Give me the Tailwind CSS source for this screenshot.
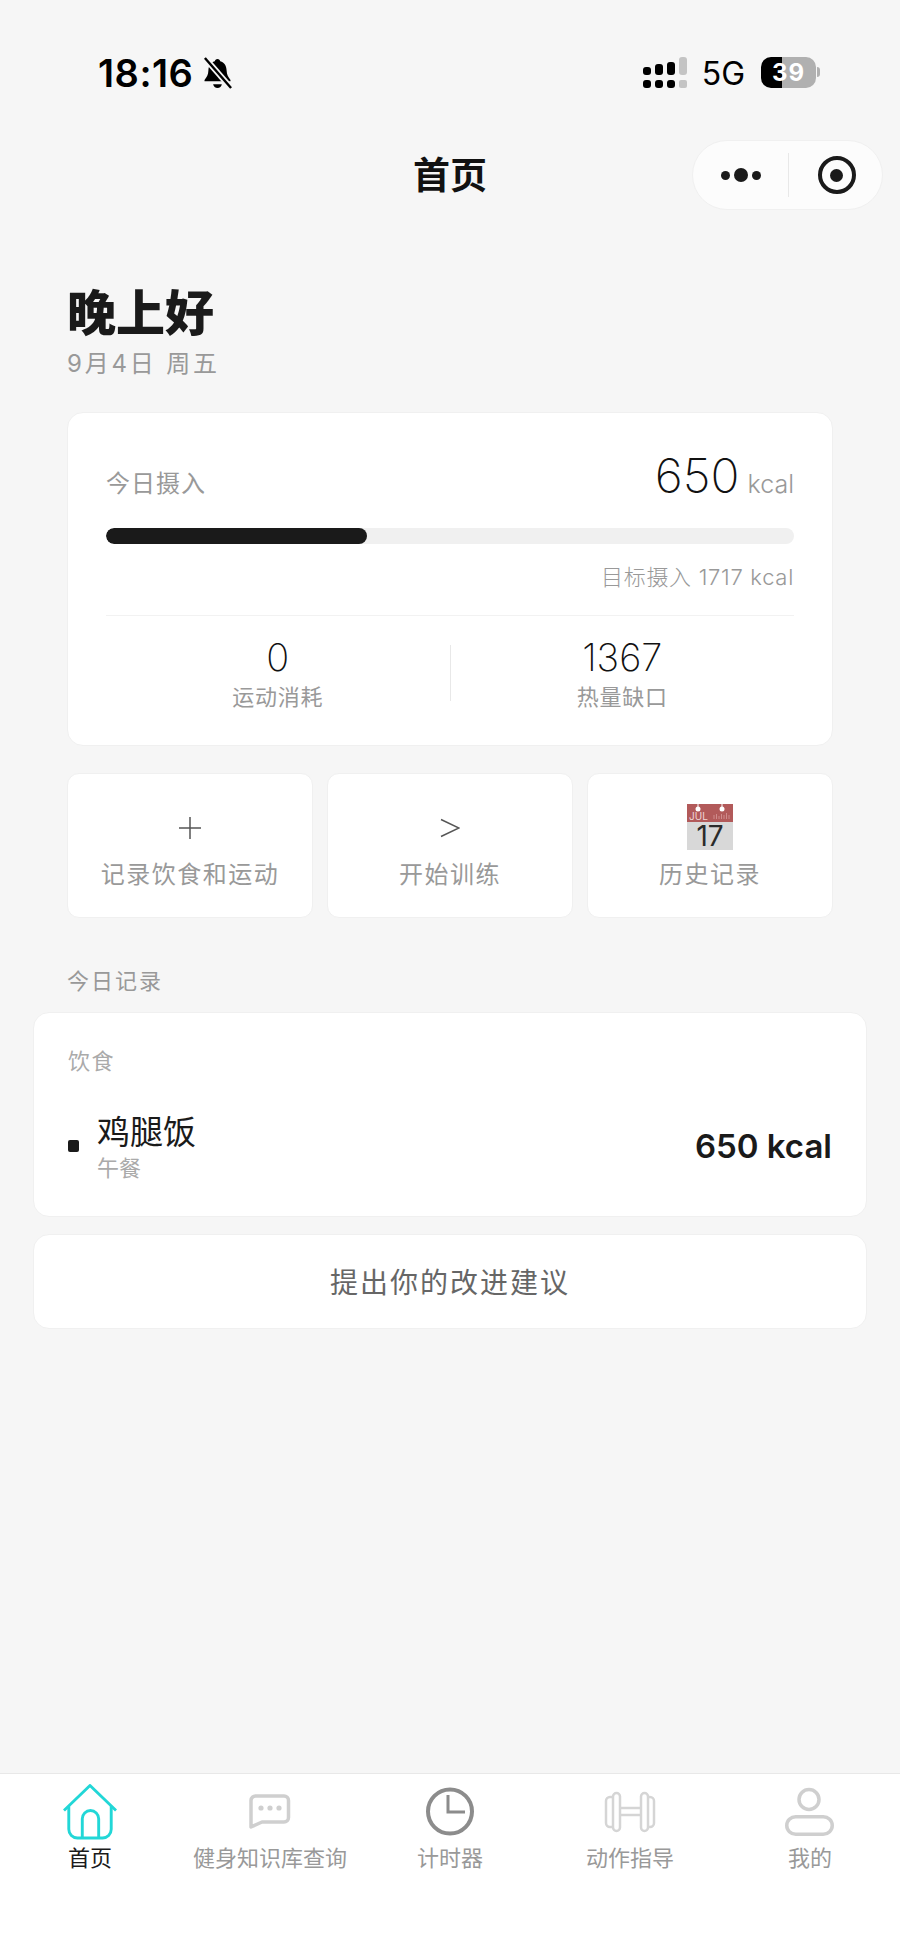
<!DOCTYPE html>
<html lang="zh-CN">
<head>
  <title>首页</title>
  <meta charset="utf-8">
  <script src="https://cdn.jsdelivr.net/npm/@tailwindcss/browser@4"></script>
</head>
<body class="w-[900px] h-[1957px] flex flex-col bg-[#f6f6f6] text-[#1a1a1a] font-['Inter','Noto_Sans_CJK_SC',sans-serif] overflow-hidden">

  <!-- status bar -->
  <div class="h-[140px] flex justify-between pt-[56px] pl-[98px] pr-[80px] shrink-0">
    <div class="flex h-[34px] items-center text-black">
      <span class="text-[38px] leading-none font-semibold tracking-[0.500px]">18:16</span>
      <svg class="ml-[9px]" width="31" height="35" viewBox="0 0 32 36">
        <path d="M16 3c1.600 0 2.600 1 2.800 2.400 4.400 1.200 6.400 4.800 6.600 9.600.2 4.600 1.600 6.600 4 9.600v1.400H2.600v-1.400c2.400-3 3.800-5 4-9.600.2-4.800 2.200-8.400 6.600-9.600C13.400 4 14.400 3 16 3z" fill="#000"/>
        <path d="M11.500 29h9c-.4 2.400-2.200 4-4.500 4s-4.100-1.600-4.500-4z" fill="#000"/>
        <path d="M3 2l27 31" stroke="#f6f6f6" stroke-width="6"/>
        <path d="M3 2l27 31" stroke="#000" stroke-width="2.500"/>
      </svg>
    </div>
    <div class="flex h-[32px] items-center">
      <div class="flex flex-col gap-[5px] w-[44px]">
        <div class="flex items-end gap-[4px] h-[18px]">
          <div class="w-[8px] h-[8px] rounded-[3px] bg-black"></div>
          <div class="w-[8px] h-[11px] rounded-[3px] bg-black"></div>
          <div class="w-[8px] h-[13px] rounded-[3px] bg-black"></div>
          <div class="w-[8px] h-[18px] rounded-[3px] bg-[#c4c4c4]"></div>
        </div>
        <div class="flex gap-[4px] h-[8px]">
          <div class="w-[8px] rounded-[3px] bg-black"></div>
          <div class="w-[8px] rounded-[3px] bg-black"></div>
          <div class="w-[8px] rounded-[3px] bg-black"></div>
          <div class="w-[8px] rounded-[2px] bg-[#c4c4c4]"></div>
        </div>
      </div>
      <span class="ml-[15px] text-[32px] leading-none font-normal text-black mt-[3px]">5G</span>
      <div class="ml-[16px] relative flex w-[55px] h-[31px] rounded-[10px] overflow-hidden">
        <div class="w-[21px] bg-black"></div>
        <div class="flex-1 bg-[#b0b0b0]"></div>
        <span class="absolute inset-0 text-center text-white text-[24px] leading-[31px] font-bold tracking-[1px]">39</span>
      </div>
      <div class="ml-[1px] w-[3px] h-[10px] rounded-r-full bg-[#b0b0b0]"></div>
    </div>
  </div>

  <!-- nav bar -->
  <div class="relative h-[70px] flex items-center justify-center shrink-0">
    <h1 class="text-[37px] leading-none font-bold text-[#111]">首页</h1>
    <div class="absolute right-[17px] top-0 w-[191px] h-[70px] flex items-center rounded-full bg-[#fcfcfc] border border-[#f0f0f0]">
      <div class="w-[95px] flex items-center justify-center gap-[4px]">
        <div class="w-[9px] h-[9px] rounded-full bg-[#1a1a1a]"></div>
        <div class="w-[14px] h-[14px] rounded-full bg-[#1a1a1a]"></div>
        <div class="w-[9px] h-[9px] rounded-full bg-[#1a1a1a]"></div>
      </div>
      <div class="w-px h-[44px] bg-[#e8e8e8]"></div>
      <div class="flex-1 flex items-center justify-center pl-[2px]">
        <div class="w-[38px] h-[38px] rounded-full border-[4px] border-[#1a1a1a] flex items-center justify-center">
          <div class="w-[13px] h-[13px] rounded-full bg-[#1a1a1a]"></div>
        </div>
      </div>
    </div>
  </div>

  <main class="flex-1 flex flex-col">
    <!-- greeting -->
    <div class="px-[67px] pt-[74px]">
      <h2 class="text-[49px] leading-[60px] font-black">晚上好</h2>
      <p class="mt-[4px] text-[24px] leading-[32px] text-[#999] tracking-[2.800px]">9月4日 周五</p>
    </div>

    <!-- intake card -->
    <section class="mx-[67px] mt-[32px] h-[334px] rounded-[16px] bg-white border border-[#f0f0f0] px-[38px]">
      <div class="flex justify-between items-end h-[88px] pt-[30px]">
        <span class="text-[24px] leading-[30px] text-[#999] tracking-[1px] mb-[2px]">今日摄入</span>
        <div class="flex items-baseline">
          <span class="text-[48px] leading-[50px] font-extralight text-[#111]">650</span>
          <span class="ml-[8px] text-[25px] leading-[30px] font-light text-[#999]">kcal</span>
        </div>
      </div>
      <div class="mt-[27px] h-[16px] rounded-full bg-[#f0f0f0] overflow-hidden">
        <div class="w-[261px] h-full rounded-full bg-[#1a1a1a]"></div>
      </div>
      <p class="mt-[18px] text-right text-[22px] leading-[30px] font-light tracking-[0.700px] text-[#999]">目标摄入 1717 kcal</p>
      <div class="mt-[23px] border-t border-[#f2f2f2] pt-[22px] flex items-center">
        <div class="flex-1 text-center">
          <div class="text-[38px] leading-[38px] font-extralight text-[#111]">0</div>
          <div class="mt-[6px] text-[22px] leading-[30px] tracking-[0.800px] text-[#999]">运动消耗</div>
        </div>
        <div class="w-px h-[56px] bg-[#e8e8e8] -mt-[5px]"></div>
        <div class="flex-1 text-center">
          <div class="text-[38px] leading-[38px] font-extralight text-[#111]">1367</div>
          <div class="mt-[6px] text-[22px] leading-[30px] tracking-[0.800px] text-[#999]">热量缺口</div>
        </div>
      </div>
    </section>

    <!-- quick actions -->
    <section class="mx-[67px] mt-[27px] grid grid-cols-3 gap-[14px]">
      <div class="h-[145px] rounded-[12px] bg-white border border-[#f0f0f0] flex flex-col items-center">
        <div class="h-[85px] flex items-center justify-center pt-[23px]">
          <svg width="22" height="22" viewBox="0 0 22 22"><path d="M11 0v22M0 11h22" stroke="#555" stroke-width="1.500"/></svg>
        </div>
        <span class="text-[24px] leading-[32px] tracking-[1.500px] text-[#999]">记录饮食和运动</span>
      </div>
      <div class="h-[145px] rounded-[12px] bg-white border border-[#f0f0f0] flex flex-col items-center">
        <div class="h-[85px] flex items-center justify-center pt-[23px]">
          <svg width="20" height="20" viewBox="0 0 20 20"><path d="M1 1.500 19 10 1 18.500" fill="none" stroke="#555" stroke-width="1.500"/></svg>
        </div>
        <span class="text-[24px] leading-[32px] tracking-[1.500px] text-[#999]">开始训练</span>
      </div>
      <div class="h-[145px] rounded-[12px] bg-white border border-[#f0f0f0] flex flex-col items-center">
        <div class="h-[85px] flex items-center justify-center pt-[20px]">
          <svg class="-mb-[4px]" width="46" height="50" viewBox="0 0 46 50">
            <rect y="0" width="46" height="18" fill="#b25a5a"/>
            <rect y="18" width="46" height="28" fill="#d8d8d8"/>
            <circle cx="11" cy="5" r="2.500" fill="#fff"/>
            <circle cx="35" cy="5" r="2.500" fill="#fff"/>
            <path d="M11 0v4M35 0v4" stroke="#fff" stroke-width="1"/>
            <path d="M27 15v-4M29.500 15v-5M32 15v-3M34.500 15v-5M37 15v-4M39.500 15v-6M42 15v-4" stroke="#cf8c8c" stroke-width="1"/>
            <text x="2" y="15.500" font-size="10" fill="#f0d6d6" font-family="Inter">JUL</text>
            <text x="23" y="42" text-anchor="middle" font-size="28" font-weight="400" fill="#2b2b2b" font-family="Inter">17</text>
          </svg>
        </div>
        <span class="text-[24px] leading-[32px] tracking-[1.500px] text-[#999]">历史记录</span>
      </div>
    </section>

    <!-- today's records -->
    <h3 class="mx-[67px] mt-[48px] text-[22px] leading-[30px] font-normal tracking-[2px] text-[#999]">今日记录</h3>
    <section class="mx-[33px] mt-[16px] h-[205px] rounded-[16px] bg-white border border-[#f0f0f0] px-[34px]">
      <p class="mt-[33px] text-[22px] leading-[30px] tracking-[1.500px] text-[#aaa]">饮食</p>
      <div class="mt-[36px] flex items-center justify-between">
        <div class="flex items-center">
          <div class="w-[11px] h-[12px] rounded-[2px] bg-[#1a1a1a] -mt-[3px]"></div>
          <div class="ml-[18px]">
            <div class="text-[33px] leading-[41px] font-normal">鸡腿饭</div>
            <div class="text-[22px] leading-[30px] text-[#aaa]">午餐</div>
          </div>
        </div>
        <span class="text-[33px] leading-[40px] font-semibold -mt-[4px]">650 kcal</span>
      </div>
    </section>

    <button class="mx-[33px] mt-[17px] h-[95px] pt-[3px] rounded-[16px] bg-white border border-[#f0f0f0] text-[28px] tracking-[2px] text-[#666]" type="button">提出你的改进建议</button>
  </main>

  <!-- tab bar -->
  <nav class="h-[184px] shrink-0 bg-white border-t border-[#e8e8e8] grid grid-cols-5 text-[22px] leading-[28px] text-[#999] text-center">
    <div class="flex flex-col items-center pt-[10px]">
      <svg class="mb-[2px]" width="54" height="56" viewBox="0 0 56 58" fill="none" stroke="#22d7d7" stroke-width="3" stroke-linejoin="round">
        <path d="M1 27.500 28 1.500l27 26"/>
        <path d="M6 23v24a9 9 0 0 0 9 9h26a9 9 0 0 0 9-9V23"/>
        <path d="M20 56V36a8.500 8.500 0 0 1 17 0v20"/>
      </svg>
      <span class="mt-[2px] text-[#1a1a1a]">首页</span>
    </div>
    <div class="flex flex-col items-center pt-[10px]">
      <svg width="56" height="58" viewBox="0 0 56 58" fill="none" stroke="#cfcfcf" stroke-width="3.500" stroke-linejoin="round">
        <path d="M14 12h28a4.500 4.500 0 0 1 4.500 4.500v17a4.500 4.500 0 0 1-4.500 4.500H20l-11 5V16.500A4.500 4.500 0 0 1 14 12z"/>
        <circle cx="19" cy="24" r="2.600" fill="#cfcfcf" stroke="none"/>
        <circle cx="28" cy="24" r="2.600" fill="#cfcfcf" stroke="none"/>
        <circle cx="37" cy="24" r="2.600" fill="#cfcfcf" stroke="none"/>
      </svg>
      <span class="mt-[2px]">健身知识库查询</span>
    </div>
    <div class="flex flex-col items-center pt-[10px]">
      <svg width="56" height="58" viewBox="0 0 56 58" fill="none" stroke="#8c8c8c" stroke-width="4">
        <circle cx="28" cy="27.500" r="22"/>
        <path d="M26 11v17h17" stroke-width="3"/>
      </svg>
      <span class="mt-[2px]">计时器</span>
    </div>
    <div class="flex flex-col items-center pt-[10px]">
      <svg width="56" height="58" viewBox="0 0 56 58" fill="none" stroke="#d5d5d5" stroke-width="2.500">
        <rect x="11" y="9" width="7" height="38" rx="3.500"/>
        <rect x="39" y="9" width="7" height="38" rx="3.500"/>
        <path d="M11 13H8a4 4 0 0 0-4 4v22a4 4 0 0 0 4 4h3M46 13h2a4 4 0 0 1 4 4v22a4 4 0 0 1-4 4h-2"/>
        <path d="M18 24h21M18 31h21"/>
      </svg>
      <span class="mt-[2px]">动作指导</span>
    </div>
    <div class="flex flex-col items-center pt-[10px]">
      <svg width="56" height="58" viewBox="0 0 56 58" fill="none" stroke="#cfcfcf" stroke-width="3.500">
        <circle cx="27" cy="15.500" r="10"/>
        <rect x="4.750" y="32.750" width="45.500" height="17.500" rx="9"/>
      </svg>
      <span class="mt-[2px]">我的</span>
    </div>
  </nav>
</body>
</html>
